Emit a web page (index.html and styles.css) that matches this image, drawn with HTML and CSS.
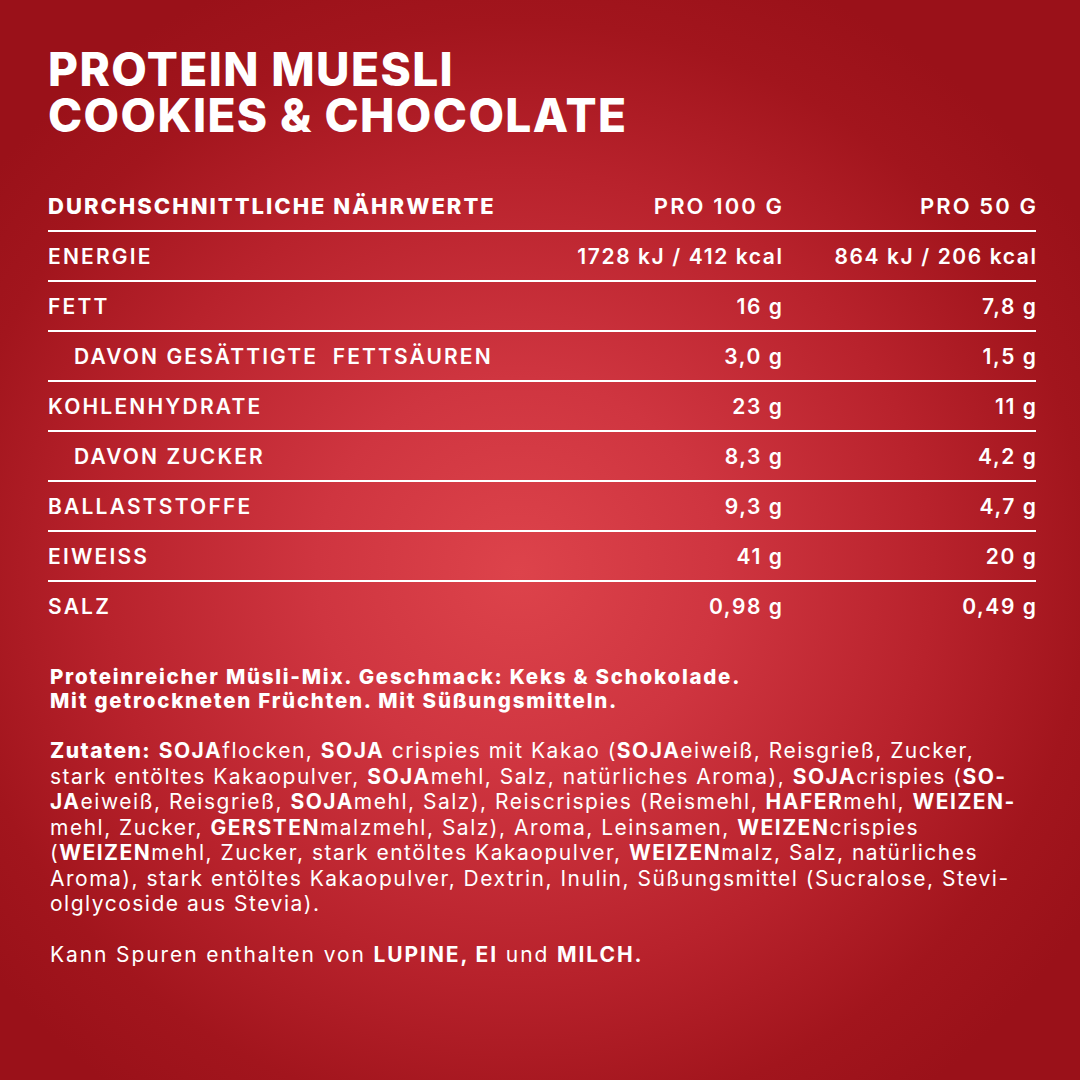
FILE: index.html
```html
<!DOCTYPE html>
<html lang="de">
<head>
<meta charset="utf-8">
<title>Protein Muesli Cookies &amp; Chocolate</title>
<link rel="stylesheet" href="styles.css">
</head>
<body>
<div class="page">
  <h1 class="title"><span class="title-line">PROTEIN MUESLI</span><span class="title-line">COOKIES &amp; CHOCOLATE</span></h1>

  <div class="table">
    <div class="row head">
      <span class="label">DURCHSCHNITTLICHE NÄHRWERTE</span>
      <span class="val">PRO 100 G</span>
      <span class="val">PRO 50 G</span>
    </div>
    <div class="row">
      <span class="label">ENERGIE</span>
      <span class="val">1728 kJ / 412 kcal</span>
      <span class="val">864 kJ / 206 kcal</span>
    </div>
    <div class="row">
      <span class="label">FETT</span>
      <span class="val">16 g</span>
      <span class="val">7,8 g</span>
    </div>
    <div class="row sub">
      <span class="label">DAVON GESÄTTIGTE&nbsp; FETTSÄUREN</span>
      <span class="val">3,0 g</span>
      <span class="val">1,5 g</span>
    </div>
    <div class="row">
      <span class="label">KOHLENHYDRATE</span>
      <span class="val">23 g</span>
      <span class="val">11 g</span>
    </div>
    <div class="row sub">
      <span class="label">DAVON ZUCKER</span>
      <span class="val">8,3 g</span>
      <span class="val">4,2 g</span>
    </div>
    <div class="row">
      <span class="label">BALLASTSTOFFE</span>
      <span class="val">9,3 g</span>
      <span class="val">4,7 g</span>
    </div>
    <div class="row">
      <span class="label">EIWEISS</span>
      <span class="val">41 g</span>
      <span class="val">20 g</span>
    </div>
    <div class="row last">
      <span class="label">SALZ</span>
      <span class="val">0,98 g</span>
      <span class="val">0,49 g</span>
    </div>
  </div>

  <p class="claim">Proteinreicher Müsli-Mix. Geschmack: Keks &amp; Schokolade.<br>Mit getrockneten Früchten. Mit Süßungsmitteln.</p>

  <p class="ingredients"><b class="heavy">Zutaten:</b> <b>SOJA</b>flocken, <b>SOJA</b> crispies mit Kakao (<b>SOJA</b>eiweiß, Reisgrieß, Zucker,<br>stark entöltes Kakaopulver, <b>SOJA</b>mehl, Salz, natürliches Aroma), <b>SOJA</b>crispies (<b>SO-</b><br><b>JA</b>eiweiß, Reisgrieß, <b>SOJA</b>mehl, Salz), Reiscrispies (Reismehl, <b>HAFER</b>mehl, <b>WEIZEN-</b><br>mehl, Zucker, <b>GERSTEN</b>malzmehl, Salz), Aroma, Leinsamen, <b>WEIZEN</b>crispies<br>(<b>WEIZEN</b>mehl, Zucker, stark entöltes Kakaopulver, <b>WEIZEN</b>malz, Salz, natürliches<br>Aroma), stark entöltes Kakaopulver, Dextrin, Inulin, Süßungsmittel (Sucralose, Stevi-<br>olglycoside aus Stevia).</p>

  <p class="trace">Kann Spuren enthalten von <b>LUPINE, EI</b> und <b>MILCH.</b></p>
</div>
</body>
</html>
```

FILE: styles.css
```css
html, body {
  margin: 0;
  padding: 0;
}

body {
  width: 1080px;
  height: 1080px;
  overflow: hidden;
  color: #ffffff;
  font-family: "Inter", "Liberation Sans", sans-serif;
  background: radial-gradient(ellipse 62% 60% at 48% 53%, #dd434b 0%, #cf3540 30%, #b8222c 62%, #a2151d 85%, #9a1119 100%);
}

.page {
  box-sizing: border-box;
  width: 1080px;
  height: 1080px;
  padding: 46px 44px 0 48px;
  display: flex;
  flex-direction: column;
}

.title {
  margin: 0;
  display: flex;
  flex-direction: column;
  font-size: 46px;
  line-height: 46px;
  font-weight: 800;
  letter-spacing: 1.4px;
}

.title-line {
  display: block;
  white-space: nowrap;
}

.table {
  margin-top: 44px;
  display: flex;
  flex-direction: column;
}

.row {
  display: grid;
  grid-template-columns: 1fr 240px 254px;
  align-items: center;
  height: 48px;
  border-bottom: 2px solid #ffffff;
  font-size: 21px;
  font-weight: 600;
  white-space: nowrap;
}

.row.last {
  border-bottom: none;
}

.row .label {
  letter-spacing: 2.2px;
}

.row .val {
  text-align: right;
  letter-spacing: 1.6px;
  margin-right: -1.6px;
}

.row.head {
  font-size: 22px;
}

.row.head .label {
  font-weight: 800;
  letter-spacing: 2px;
}

.row.head .val {
  letter-spacing: 2.1px;
  margin-right: -2.1px;
}

.row.sub .label {
  padding-left: 26px;
  letter-spacing: 2.1px;
}

.claim {
  margin: 35px 0 0 2px;
  font-size: 20.5px;
  line-height: 24px;
  font-weight: 800;
  letter-spacing: 1.75px;
  white-space: nowrap;
}

.ingredients {
  margin: 25px 0 0 2px;
  font-size: 21px;
  line-height: 25.5px;
  font-weight: 400;
  letter-spacing: 1.5px;
  white-space: nowrap;
}

.ingredients b,
.trace b {
  font-weight: 700;
}

.ingredients b.heavy {
  font-weight: 800;
}

.trace {
  margin: 25px 0 0 2px;
  font-size: 21px;
  line-height: 25.5px;
  font-weight: 400;
  letter-spacing: 1.9px;
  white-space: nowrap;
}
```
